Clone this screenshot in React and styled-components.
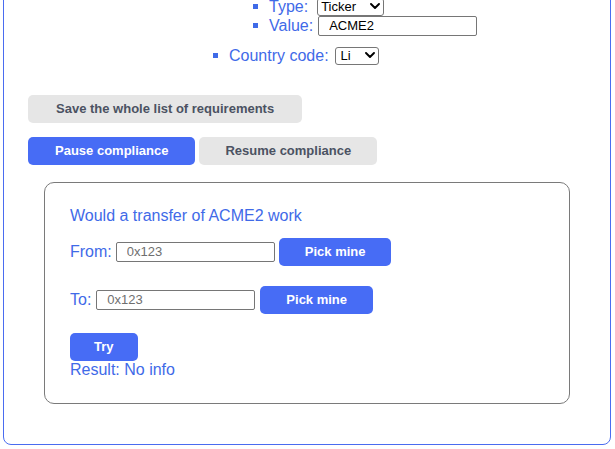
import React from 'react';
import styled, { createGlobalStyle } from 'styled-components';

const Global = createGlobalStyle`
  html, body { margin: 0; padding: 0; background: #fff; overflow: hidden; }
  body { font-family: "Liberation Sans", Arial, Helvetica, sans-serif; }
`;

const BLUE_TEXT = '#3f6ae8';
const BLUE_BTN = '#476cf5';

const Page = styled.div`
  padding: 0 4px 6px 3px;
  margin-top: -46px;
`;

const Panel = styled.section`
  border: 1px solid #4a6cf0;
  border-radius: 8px;
  padding: 24px;
`;

const List = styled.ul`
  margin: 0 0 30px 0;
  padding-left: ${(p) => p.$indent}px;
  list-style: square;
  color: ${BLUE_TEXT};
  font-size: 16px;
  line-height: 18px;
`;

const SubList = styled.ul`
  margin: 0 0 10px 0;
  padding-left: 40px;
  list-style: square;
`;

const Item = styled.li`
  min-height: 18px;
`;

const Field = styled.span`
  display: inline-flex;
  align-items: center;
  gap: ${(p) => p.$gap || 4}px;
  vertical-align: middle;
`;

const SelectWrap = styled.span`
  position: relative;
  display: inline-flex;
  width: ${(p) => p.$w}px;
`;

const Select = styled.select`
  appearance: none;
  -webkit-appearance: none;
  width: 100%;
  height: 18px;
  box-sizing: border-box;
  border: 1px solid #767676;
  border-radius: 3px;
  background: #fff;
  padding: 0 16px 0 ${(p) => p.$pl}px;
  font-family: "Liberation Sans", Arial, sans-serif;
  font-size: 13px;
  color: #000;
  line-height: 16px;
`;

const Chevron = styled.svg`
  position: absolute;
  right: 4px;
  top: 5px;
  width: 10px;
  height: 7px;
  pointer-events: none;
`;

const TextInput = styled.input`
  width: 159px;
  height: 20px;
  box-sizing: border-box;
  border: 1px solid #767676;
  border-radius: 2px;
  padding: 0 10px;
  font-family: "Liberation Sans", Arial, sans-serif;
  font-size: 13px;
  color: #000;
  background: #fff;
  &::placeholder { color: #6f6f6f; }
`;

const ButtonRow = styled.div`
  display: flex;
  gap: 4px;
  margin-top: ${(p) => p.$mt || 0}px;
`;

const Button = styled.button`
  height: 28px;
  padding: 0 ${(p) => p.$px || 26}px;
  border: none;
  border-radius: 5px;
  font-family: "Liberation Sans", Arial, sans-serif;
  font-weight: bold;
  font-size: 13px;
  cursor: pointer;
  background: ${(p) => (p.$primary ? BLUE_BTN : '#e6e6e6')};
  color: ${(p) => (p.$primary ? '#fff' : '#4b5262')};
  flex: none;
`;

const Card = styled.div`
  margin: 17px 16px 16px 16px;
  border: 1px solid #7a7a7a;
  border-radius: 10px;
  padding: 24px 25px;
  color: ${BLUE_TEXT};
  font-size: 16px;
  line-height: 18px;
`;

const Title = styled.div``;

const Row = styled.div`
  display: flex;
  align-items: center;
  gap: ${(p) => p.$gap || 4}px;
  margin-top: ${(p) => p.$mt}px;
`;

const Label = styled.span`
  white-space: nowrap;
`;

const Result = styled.div``;

function Dropdown({ width, value, options, pl }) {
  return (
    <SelectWrap $w={width}>
      <Select $pl={pl} defaultValue={value}>
        {options.map((o) => (
          <option key={o}>{o}</option>
        ))}
      </Select>
      <Chevron viewBox="0 0 10 7">
        <polyline points="1,1 5,5 9,1" fill="none" stroke="#000" strokeWidth="1.9" strokeLinecap="round" strokeLinejoin="round" />
      </Chevron>
    </SelectWrap>
  );
}

export default function App() {
  return (
    <>
      <Global />
      <Page>
        <Panel>
          <List $indent={201}>
            <Item>
              Token:
              <SubList>
                <Item>
                  <Field $gap={9}>
                    Type: <Dropdown width={67} pl={3} value="Ticker" options={['Ticker', 'Address']} />
                  </Field>
                </Item>
                <Item>
                  <Field $gap={5}>
                    Value: <TextInput defaultValue="ACME2" />
                  </Field>
                </Item>
              </SubList>
            </Item>
            <Item>
              <Field $gap={6}>
                Country code: <Dropdown width={44} pl={5} value="Li" options={['Li', 'US', 'DE']} />
              </Field>
            </Item>
          </List>

          <ButtonRow>
            <Button $px={28}>Save the whole list of requirements</Button>
          </ButtonRow>
          <ButtonRow $mt={14}>
            <Button $primary $px={27}>Pause compliance</Button>
            <Button $px={26}>Resume compliance</Button>
          </ButtonRow>

          <Card>
            <Title>Would a transfer of ACME2 work</Title>
            <Row $mt={13}>
              <Label>From:</Label>
              <TextInput placeholder="0x123" />
              <Button $primary>Pick mine</Button>
            </Row>
            <Row $mt={20} $gap={5}>
              <Label>To:</Label>
              <TextInput placeholder="0x123" />
              <Button $primary>Pick mine</Button>
            </Row>
            <Row $mt={19}>
              <Button $primary $px={24}>Try</Button>
            </Row>
            <Result>Result: No info</Result>
          </Card>
        </Panel>
      </Page>
    </>
  );
}
